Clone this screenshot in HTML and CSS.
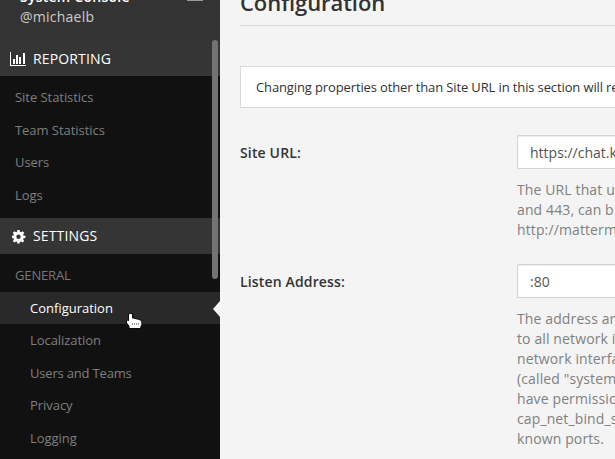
FILE: index.html
```
<!DOCTYPE html>
<html lang="en">
<head>
<meta charset="utf-8">
<title>System Console</title>
<link rel="stylesheet" href="styles.css">
</head>
<body>
<div class="console">
  <aside class="sidebar">
    <header class="team-header">
      <div class="team-info">
        <div class="team-name">System Console</div>
        <div class="user-name">@michaelb</div>
      </div>
      <span class="menu-bar"></span>
    </header>
    <nav>
      <h4 class="category">
        <svg class="category-icon" width="17" height="16" viewBox="0 0 17 16" shape-rendering="crispEdges"><path fill="#fff" d="M0 1h1v13h15v1H0zM3 8h2v5H3zM6 4h2v9H6zM9 6h2v7H9zM13 2h2v11h-2z"/></svg>
        <span>REPORTING</span>
      </h4>
      <ul class="links">
        <li>Site Statistics</li>
        <li>Team Statistics</li>
        <li>Users</li>
        <li>Logs</li>
      </ul>
      <h4 class="category settings">
        <svg class="category-icon" width="17" height="16" viewBox="0 0 17 16"><path fill="#fff" fill-rule="evenodd" d="M7.4 2h2.2l.4 1.9 1 .4 1.6-1.1 1.6 1.6-1.1 1.6.4 1 1.9.3v2.2l-1.9.4-.4 1 1.1 1.6-1.6 1.6-1.6-1.1-1 .4-.4 1.7H7.4L7 13.8l-1-.4-1.6 1.1-1.6-1.6 1.1-1.6-.4-1L2 9.9V7.7l1.5-.3.4-1-1.1-1.6 1.6-1.6L6 4.3l1-.4zM8.5 6.5a2.2 2.2 0 1 0 0 4.4 2.2 2.2 0 0 0 0-4.4z"/></svg>
        <span>SETTINGS</span>
      </h4>
      <div class="section-name">GENERAL</div>
      <ul class="links sub">
        <li class="active">Configuration</li>
        <li>Localization</li>
        <li>Users and Teams</li>
        <li>Privacy</li>
        <li>Logging</li>
      </ul>
    </nav>
    <span class="scroll-thumb"></span>
    <svg class="pointer" width="18" height="18" viewBox="0 0 18 18"><path class="hand" d="M3 2.5Q4.5 1 6 2.5V6.5q1.5-.5 2.5.6 1.500-.5 2.500.5 1.300-.4 2.300.6 2-.2 2 1.500V13l-1 1.500v1.500H3.500V14L1 11V9q1-1 2 .5z"/><path stroke="#999" fill="none" d="M6.500 11v2M8.500 11v2M10.500 11v2M12.500 11v2"/></svg>
  </aside>
  <main class="content">
    <h3 class="title">Configuration</h3>
    <div class="banner">Changing properties other than Site URL in this section will require a server restart before taking effect.</div>
    <div class="form-group">
      <label for="site">Site URL:</label>
      <div class="field">
        <input id="site" type="text" value="https://chat.k">
        <p>The URL that u<br>and 443, can b<br>http://matterm</p>
      </div>
    </div>
    <div class="form-group">
      <label for="listen">Listen Address:</label>
      <div class="field">
        <input id="listen" type="text" value=":80">
        <p>The address and<br>to all network in<br>network interfac<br>(called "system<br>have permission<br>cap_net_bind_se<br>known ports.</p>
      </div>
    </div>
  </main>
</div>
</body>
</html>
```
FILE: styles.css
```
* { box-sizing: border-box; }
body {
  margin: 0;
  overflow: hidden;
  font: 14px/20px "Open Sans", sans-serif;
  color: #333;
  background: #f4f4f4;
}
.console { display: flex; height: 459px; overflow: hidden; }
.sidebar {
  position: relative;
  flex: 0 0 220px;
  overflow: hidden;
  background: #111;
}
.team-header {
  display: flex;
  justify-content: space-between;
  height: 40px;
  padding: 0 17px 0 20px;
  background: #333;
}
.team-info { margin-top: -13px; white-space: nowrap; letter-spacing: .25px; }
.team-name { font-weight: 600; color: #fff; }
.user-name { color: #ccc; }
.menu-bar { width: 16px; height: 1px; background: #999; }
.category {
  display: flex;
  align-items: center;
  height: 36px;
  margin: 0;
  padding: 1px 10px 0;
  font-size: 14px;
  font-weight: 400;
  letter-spacing: .15px;
  color: #fff;
  background: #353535;
}
.category.settings { padding: 0 10px 1px; }
.category-icon { margin-right: 6px; }
.links {
  height: 142px;
  margin: 0;
  padding: 5px 0 0;
  list-style: none;
  font-size: 13px;
  letter-spacing: -.05px;
  color: #7f7f7f;
}
.links li { height: 32.5px; padding-left: 15px; line-height: 32.5px; }
.section-name {
  height: 37.5px;
  padding: 11px 15px 0;
  font-size: 13px;
  letter-spacing: -.15px;
  color: #777;
}
.links.sub { height: auto; padding: 0; }
.links.sub li { padding-left: 30px; }
.links.sub li:nth-child(3) { letter-spacing: -.18px; }
.links .active { position: relative; letter-spacing: 0; color: #fff; background: #292929; }
.active::after {
  content: "";
  position: absolute;
  right: 0;
  top: 9px;
  border: solid transparent;
  border-width: 8px 7px 8px 0;
  border-right-color: #f4f4f4;
}
.scroll-thumb {
  position: absolute;
  left: 212px;
  top: 40px;
  width: 6px;
  height: 239px;
  border-radius: 3px;
  background: #737373;
}
.pointer { position: absolute; left: 126px; top: 312px; }
.hand { fill: #fff; stroke: #050505; stroke-width: 1.5px; paint-order: stroke; }
.content {
  flex: 1;
  min-width: 0;
  padding-left: 20px;
  overflow: hidden;
}
.title {
  height: 36px;
  margin: -10px 0 40px;
  border-bottom: 1px solid #d9d9d9;
  font-size: 22px;
  line-height: 24px;
  font-weight: 600;
  letter-spacing: -.07px;
}
.banner {
  height: 42px;
  padding: 0 15px;
  border: 1px solid #d9d9d9;
  border-right: 0;
  font-size: 13px;
  line-height: 41px;
  letter-spacing: -.125px;
  white-space: nowrap;
  overflow: hidden;
  background: #fff;
}
.form-group { display: flex; margin-top: 27px; }
.form-group + .form-group { margin-top: 24px; }
label { flex: 0 0 277px; padding-top: 8px; font-weight: 600; letter-spacing: .15px; }
.field { flex: 0 0 400px; }
input {
  display: block;
  width: 100%;
  height: 34px;
  padding: 6px 12px;
  border: 1px solid #d3d3d3;
  border-radius: 1px;
  font: inherit;
  color: #555;
  background: #fff;
  box-shadow: inset 0 1px 1px rgba(0, 0, 0, .075);
}
p { margin: 11px 0 0; letter-spacing: .12px; color: #808080; }
```
